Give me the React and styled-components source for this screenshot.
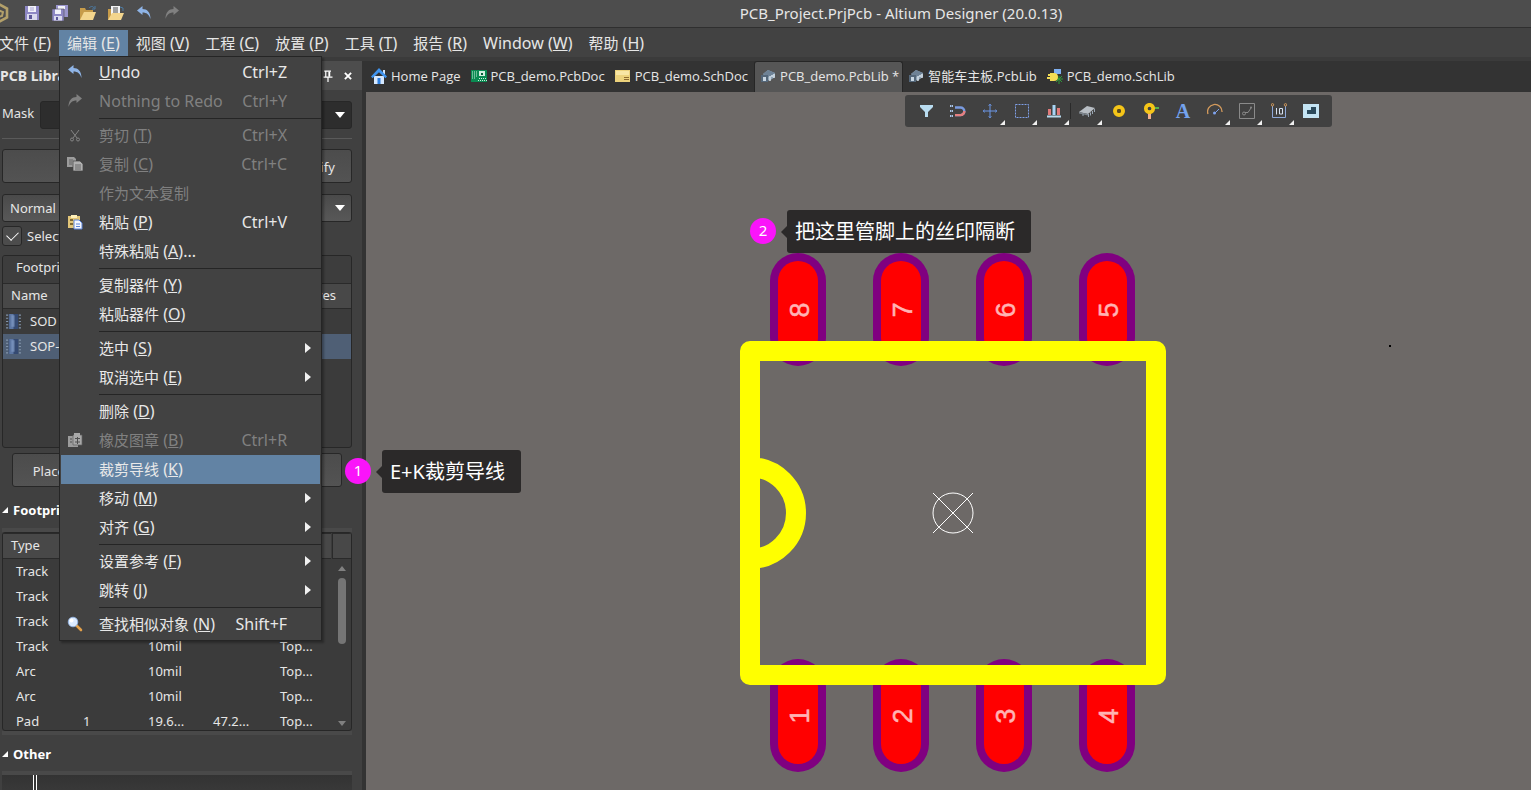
import React from "react";
import styled, { createGlobalStyle, css } from "styled-components";

const GlobalStyle = createGlobalStyle`
  * { box-sizing: border-box; }
  html, body { margin: 0; height: 100%; }
  body {
    background: #404040;
    color: #e6e6e6;
    font-family: "Noto Sans", "Noto Sans CJK SC", sans-serif;
    font-size: 13px;
    overflow: hidden;
  }
  button, input, select, table { font: inherit; color: inherit; }
  #root { height: 100%; }
`;

const Window = styled.div`
  position: relative;
  display: flex;
  flex-direction: column;
  height: 100vh;
  overflow: hidden;
`;

/* ---------- title bar ---------- */

const TitleBar = styled.header`
  display: flex;
  align-items: center;
  height: 28px;
  flex: none;
  padding-bottom: 2px;
  background: #4d4d4d;
  border-bottom: 1px solid #2f2f2f;
`;

const QuickTools = styled.div`
  display: flex;
  align-items: center;
  width: 271px;
  gap: 4px;
  flex: none;
`;

const Logo = styled.svg`
  width: 10px;
  height: 20px;
  margin-right: 6px;
  flex: none;
`;

const QuickButton = styled.button`
  display: grid;
  place-items: center;
  width: 24px;
  height: 24px;
  padding: 0;
  border: 0;
  background: none;
`;

const Title = styled.h1`
  flex: 1;
  margin: 0;
  font-size: 15px;
  font-weight: 400;
  line-height: 20px;
  text-align: center;
`;

/* ---------- menu bar ---------- */

const MenuBar = styled.nav`
  display: flex;
  align-items: flex-start;
  height: 33px;
  flex: none;
  padding-top: 2px;
  margin-left: -9px;
  background: #424242;
  border-bottom: 4px solid #3b3b3b;
  z-index: 5;
`;

const MenuSlot = styled.div`
  position: relative;
`;

const MenuTitle = styled.button`
  display: block;
  height: 27px;
  padding: 0 8px 2px;
  border: 0;
  font-size: 16px;
  line-height: 24px;
  white-space: nowrap;
  background: ${(p) => (p.$open ? "#6283a4" : "transparent")};
`;

const Han = styled.span`
  font-size: 15px;
`;

const Dropdown = styled.div`
  position: absolute;
  left: 0;
  top: 26px;
  width: 263px;
  padding: 1px 0 1px 1px;
  background: #424242;
  border: 1px solid #252525;
  box-shadow: 2px 2px 2px rgba(0, 0, 0, 0.3);
`;

const MenuRow = styled.button`
  display: grid;
  grid-template-columns: 28px 1fr auto 33px;
  align-items: center;
  width: 259px;
  height: 29px;
  padding: 0 0 2px;
  border: 0;
  text-align: left;
  font-size: 16px;
  line-height: 20px;
  white-space: nowrap;
  color: ${(p) => (p.disabled ? "#808080" : "#e8e8e8")};
  background: ${(p) => (p.$active ? "#6283a4" : "transparent")};
`;

const RowIcon = styled.span`
  display: grid;
  place-items: center;
`;

const RowLabel = styled.span`
  padding-left: 10px;
`;

const SubArrow = styled.span`
  justify-self: end;
  margin-right: 9px;
  border-left: 6px solid #f0f0f0;
  border-top: 5px solid transparent;
  border-bottom: 5px solid transparent;
`;

const MenuRule = styled.hr`
  height: 1px;
  margin: 2px 0 2px 38px;
  border: 0;
  background: #252525;
`;

/* ---------- left panel ---------- */

const Workspace = styled.div`
  display: flex;
  flex: 1;
  min-height: 0;
`;

const Panel = styled.aside`
  width: 366px;
  flex: none;
  overflow: hidden;
  background: #404040;
  border-right: 4px solid #333333;
`;

const PanelHeader = styled.div`
  display: flex;
  align-items: center;
  height: 29px;
  padding-right: 4px;
  background: #4d4d4d;
`;

const PanelTitle = styled.h2`
  flex: 1;
  margin: 0;
  font-size: 14px;
  line-height: 20px;
`;

const HeaderButton = styled.button`
  display: grid;
  place-items: center;
  width: 20px;
  height: 20px;
  padding: 0;
  border: 0;
  background: none;
`;

const PanelBody = styled.div`
  width: 352px;
  padding: 10px 0 0 2px;
`;

const MaskRow = styled.div`
  display: flex;
  align-items: center;
  height: 29px;
  gap: 6px;
`;

const MaskLabel = styled.label`
  padding-bottom: 3px;
`;

const frame = css`
  border: 1px solid #272727;
  border-radius: 3px;
`;

const SelectWrap = styled.div`
  display: grid;
  flex: 1;
  align-items: center;
`;

const Select = styled.select`
  ${frame}
  appearance: none;
  padding: 0 7px;
  grid-area: 1 / 1;
  width: 100%;
  height: 28px;
  background: ${(p) => (p.$dark ? "#2d2d2d" : "linear-gradient(#4a4a4a, #585858)")};
`;

const Caret = styled.span`
  grid-area: 1 / 1;
  justify-self: end;
  margin-right: 7px;
  border-top: 6px solid #fff;
  border-left: 5px solid transparent;
  border-right: 5px solid transparent;
  pointer-events: none;
`;

const Rule = styled.hr`
  height: 1px;
  margin: 9px 0 10px;
  border: 0;
  background: #5a5a5a;
`;

const ButtonRow = styled.div`
  display: grid;
  grid-template-columns: ${(p) => p.$columns};
  gap: ${(p) => p.$gap || 8}px;
  margin: ${(p) => p.$margin || 0};
`;

const PanelButton = styled.button`
  ${frame}
  height: 34px;
  padding: 2px 0 0;
  background: linear-gradient(#4c4c4c, #535353);
`;

const CheckLabel = styled.label`
  display: flex;
  align-items: center;
  gap: 5px;
  height: 20px;
  margin: 4px 0 9px;
`;

const CheckBox = styled.input`
  ${frame}
  appearance: none;
  width: 20px;
  height: 20px;
  margin: 0;
  background: #4c4c4c;
  position: relative;
  &:checked::after {
    content: "";
    position: absolute;
    left: 4px;
    top: 4px;
    width: 10px;
    height: 6px;
    border-left: 1px solid #fff;
    border-bottom: 1px solid #fff;
    transform: rotate(-45deg);
  }
`;

const ListFrame = styled.section`
  ${frame}
  height: 193px;
  overflow: hidden;
  background: #3b3b3b;
`;

const ListTitle = styled.h3`
  margin: 0;
  padding-left: 13px;
  height: 27px;
  font-size: 13px;
  font-weight: 400;
  line-height: 22px;
  background: #3d3d3d;
`;

const Grid = styled.table`
  width: 100%;
  table-layout: fixed;
  border-collapse: collapse;
  text-align: left;
  line-height: 18px;
`;

const HeadCell = styled.th`
  height: 25px;
  padding: 0 0 2px 8px;
  font-weight: 400;
  white-space: nowrap;
  background: #484848;
  border-top: 1px solid #2a2a2a;
  border-bottom: 1px solid #2a2a2a;
  text-align: ${(p) => (p.$end ? "right" : "left")};
  padding-right: ${(p) => (p.$end ? "15px" : "0")};
`;

const FootprintRow = styled.tr`
  height: 25px;
  background: ${(p) => (p.$selected ? "#4f5f75" : "transparent")};
`;

const FootprintCell = styled.td`
  padding: 0 0 0 2px;
`;

const PartName = styled.span`
  display: flex;
  align-items: center;
  gap: 8px;
`;

const SectionTitle = styled.h3`
  display: flex;
  align-items: center;
  gap: 5px;
  height: 20px;
  margin: 0;
  font-size: 13px;
  font-weight: 700;
  line-height: 20px;
  color: #fff;
`;

const Fold = styled.span`
  border-bottom: 6px solid #fff;
  border-left: 6px solid transparent;
`;

const PrimitiveBox = styled.div`
  margin: 8px 0 9px;
  border-top: 4px solid #494949;
  border-bottom: 4px solid #494949;
`;

const PrimitiveFrame = styled.div`
  ${frame}
  display: grid;
  grid-template-columns: 1fr 20px;
  height: 199px;
  overflow: hidden;
  background: #3b3b3b;
`;

const PrimitiveRow = styled.tr`
  height: 25px;
`;

const PrimitiveCell = styled.td`
  padding: 0 0 0 13px;
  white-space: nowrap;
`;

const ScrollSide = styled.div`
  display: flex;
  flex-direction: column;
  align-items: center;
  padding: 0 0 8px 2px;
`;

const ScrollCorner = styled.div`
  width: 20px;
  height: 26px;
  flex: none;
  background: #484848;
  border-top: 1px solid #2a2a2a;
  border-left: 1px solid #2a2a2a;
  border-bottom: 1px solid #2a2a2a;
`;

const ScrollArrow = styled.span`
  border-left: 4px solid transparent;
  border-right: 4px solid transparent;
  margin: ${(p) => (p.$down ? "auto 0 0" : "7px 0")};
  ${(p) => (p.$down ? "border-top: 5px solid #808080;" : "border-bottom: 5px solid #808080;")}
`;

const ScrollThumb = styled.span`
  width: 8px;
  height: 66px;
  border-radius: 4px;
  background: #757575;
`;

const Ruler = styled.div`
  height: 40px;
  margin-top: 7px;
  padding-left: 31px;
  border-top: 4px solid #494949;
  background: linear-gradient(#333, #404040);
`;

const RulerMark = styled.div`
  width: 4px;
  height: 36px;
  border-left: 1px solid #fff;
  border-right: 1px solid #fff;
`;

/* ---------- documents ---------- */

const Documents = styled.main`
  display: flex;
  flex-direction: column;
  flex: 1;
  min-width: 0;
`;

const Tabs = styled.div`
  display: flex;
  height: 31px;
  flex: none;
  background: #333333;
`;

const Tab = styled.button`
  display: flex;
  align-items: center;
  gap: 4px;
  height: 31px;
  padding: 0 5px 2px;
  border: 0;
  white-space: nowrap;
  background: none;
  font-family: "Open Sans", "Noto Sans CJK SC", sans-serif;
  ${(p) =>
    p.$active &&
    css`
      margin-left: 1px;
      padding: 0 3px 2px 5px;
      border: 1px solid #262626;
      border-bottom: 0;
      border-radius: 3px 3px 0 0;
      background: #565656;
    `}
`;

const Canvas = styled.div`
  position: relative;
  flex: 1;
  min-height: 0;
  overflow: hidden;
  background: #6d6967;
`;

const Drawing = styled.svg`
  position: absolute;
  left: 0;
  top: 0;
`;

const ToolStrip = styled.div`
  position: absolute;
  top: 3px;
  right: 199px;
  display: flex;
  align-items: center;
  height: 32px;
  padding: 0 5px;
  border-radius: 3px;
  background: #414141;
`;

const ToolButton = styled.button`
  position: relative;
  display: grid;
  place-items: center;
  width: 32px;
  height: 32px;
  padding: 0;
  border: 0;
  background: none;
  ${(p) =>
    p.$more &&
    css`
      &::after {
        content: "";
        position: absolute;
        right: 1px;
        bottom: 2px;
        border-bottom: 5px solid #f0f0f0;
        border-left: 5px solid transparent;
      }
    `}
`;

const StripRule = styled.span`
  width: 1px;
  height: 16px;
  background: #2a2a2a;
`;

/* ---------- callouts over the window ---------- */

const Callout = styled.div`
  position: absolute;
  left: ${(p) => p.$x}px;
  top: ${(p) => p.$y}px;
  display: flex;
  align-items: center;
  z-index: 6;
`;

const Badge = styled.span`
  width: 26px;
  height: 26px;
  margin-bottom: 2px;
  border-radius: 50%;
  background: #fa14fa;
  color: #fff;
  font-size: 15px;
  line-height: 25px;
  text-align: center;
`;

const Pointer = styled.span`
  margin-left: 5px;
  border-right: 6px solid #2b2929;
  border-top: 6px solid transparent;
  border-bottom: 6px solid transparent;
`;

const Bubble = styled.p`
  margin: 0;
  padding: 8px 16px 7px 8px;
  border-radius: 3px;
  background: #2b2929;
  color: #fff;
  font-size: 20px;
  line-height: 28px;
  white-space: nowrap;
`;

/* ---------- icons ---------- */

const Svg = ({ children, size = 16 }) => (
  <svg width={size} height={size} viewBox="0 0 16 16" fill="none" aria-hidden="true">
    {children}
  </svg>
);

const icons = {
  save: (
    <Svg>
      <path d="M1 1h14v14H1z" fill="#8d87c4" />
      <path d="M4 1h8v6H4z" fill="#f2f2fa" />
      <path d="M3 9h10v6H3z" fill="#d9d9ee" />
      <path d="M5 10h3v4H5z" fill="#5c5799" />
      <path d="M6 3h4M6 5h4" stroke="#a8a4d4" />
    </Svg>
  ),
  saveAll: (
    <Svg>
      <path d="M4 0h12v12H4z" fill="#9a95cc" />
      <path d="M6 1h7v3H6z" fill="#f2f2fa" />
      <path d="M0 4h12v12H0z" fill="#8d87c4" stroke="#4d4d4d" strokeWidth=".6" />
      <path d="M3 4.500h6v4.500H3z" fill="#f2f2fa" />
      <path d="M2 11h8v4.500H2z" fill="#d9d9ee" />
      <path d="M4 12h2v3H4z" fill="#5c5799" />
    </Svg>
  ),
  open: (
    <Svg>
      <path d="M0 3h5l1 2h7v10H0z" fill="#c79c4a" />
      <path d="M4 7h12l-3 8H0z" fill="#f3d58d" />
      <path d="M9 3c2-2 4-2 5 0" stroke="#4c7ba3" />
      <path d="M15 1v3h-3" stroke="#4c7ba3" />
    </Svg>
  ),
  openDoc: (
    <Svg>
      <path d="M0 4h4v11H0z" fill="#c79c4a" />
      <path d="M3 1h9v9H3z" fill="#f4f4f4" />
      <path d="M5 3h5M5 5h5M5 7h5" stroke="#4b4b4b" />
      <path d="M4 8h12l-3 7H0z" fill="#f3d58d" />
      <path d="M12 2l3 1v3" stroke="#4c7ba3" />
    </Svg>
  ),
  undo: (
    <Svg>
      <path d="M1 5.500L6.500 1v3C11 4 14.500 7 14.500 14 13 9.500 10.500 7.500 6.500 7.500V10z" fill="#8fb4e6" />
    </Svg>
  ),
  redo: (
    <Svg>
      <path d="M15 5.500L9.500 1v3C5 4 1.500 7 1.500 14 3 9.500 5.500 7.500 9.500 7.500V10z" fill="#808080" />
    </Svg>
  ),
  cut: (
    <Svg>
      <path d="M4 3l6 8M12 3l-6 8" stroke="#858585" />
      <circle cx="5" cy="12.500" r="1.500" stroke="#858585" />
      <circle cx="11" cy="12.500" r="1.500" stroke="#858585" />
    </Svg>
  ),
  copy: (
    <Svg>
      <path d="M0 1h7l2 2v8H0z" fill="#9c9c9c" />
      <path d="M6 5h7l3 3v7H6z" fill="#b0b0b0" stroke="#424242" strokeWidth=".7" />
      <path d="M2 4h4M2 6h3M2 8h3M8 9h6M8 11h6M8 13h6" stroke="#555" strokeWidth=".8" />
    </Svg>
  ),
  paste: (
    <Svg>
      <path d="M1 2h12v12H1z" fill="#e2c578" />
      <path d="M4 1h6v3H4z" fill="#fff0b8" />
      <path d="M3 5h3v2H3zM3 9h3v2H3z" fill="#7d6734" />
      <path d="M7 6h5l3 3v6H7z" fill="#f4f7ff" stroke="#5c83d6" />
      <path d="M9 10h4M9 12.500h4" stroke="#5c83d6" />
    </Svg>
  ),
  stamp: (
    <Svg>
      <path d="M1 4h10v11H1z" fill="#9c9c9c" />
      <path d="M6 3h9v10H6z" fill="#a8a8a8" stroke="#606060" strokeWidth=".7" />
      <path d="M7 1h6v3H7z" fill="#a8a8a8" />
      <path d="M3 7h2M3 10h2M8 6.500h5M8 10h5M10.500 5v7" stroke="#505050" />
    </Svg>
  ),
  find: (
    <Svg>
      <path d="M9 9l5 5" stroke="#e3a04a" strokeWidth="2.600" strokeLinecap="round" />
      <circle cx="6" cy="6" r="4.800" fill="#dcebff" stroke="#8fb4e6" strokeWidth=".8" />
      <circle cx="4.500" cy="4.500" r="2" fill="#fff" />
    </Svg>
  ),
  pin: (
    <Svg size={12}>
      <path d="M3 1.500h9M5 2v7M2 9.500h12M8 10v6" stroke="#fff" strokeWidth="1.600" />
      <path d="M8.500 2H11v7H8.500z" fill="#fff" />
    </Svg>
  ),
  close: (
    <Svg size={10}>
      <path d="M3 3l10 10M13 3L3 13" stroke="#fff" strokeWidth="3" />
    </Svg>
  ),
  chip: (
    <Svg size={17}>
      <path d="M1 2h2M1 5h2M1 8h2M1 11h2M1 14h2M13 2h2M13 5h2M13 8h2M13 11h2M13 14h2" stroke="#8496ad" />
      <path d="M3.500 1h9v14h-9z" fill="#354a72" />
      <path d="M4 1h4v14H4z" fill="#5d77a3" />
      <path d="M6 2h3v11H6z" fill="#7f98c2" opacity=".7" />
    </Svg>
  ),
  home: (
    <Svg>
      <path d="M12 2h2v4h-2z" fill="#d6e6fa" />
      <path d="M3 8h10v8H3z" fill="#d5e8ff" />
      <path d="M8 0L0 8.500l1.500 1.800L8 4.300l6.500 6L16 8.500z" fill="#3f94ef" />
      <path d="M6.500 10h3v6h-3z" fill="#2c7fe0" />
    </Svg>
  ),
  pcb: (
    <Svg>
      <path d="M0 2h16v12H0z" fill="#0a8a52" />
      <path d="M1 4h5M1 6h5M1 8h5M1 10h4" stroke="#c8f0dc" strokeDasharray="1 1" />
      <path d="M8 3h6v5H8z" fill="#d3efe0" />
      <path d="M10 5h2v2h-2z" fill="#06603a" />
      <path d="M7 12.500h9M8 10.500h8" stroke="#c8f0dc" strokeDasharray="1 1" />
    </Svg>
  ),
  sch: (
    <Svg>
      <path d="M0 2h15v12H0z" fill="#ecd27c" />
      <path d="M1 3h13v4H1z" fill="#f8e6a4" />
      <path d="M9 9.500h5M9 11.500h5" stroke="#8f6c2e" />
    </Svg>
  ),
  lib: (
    <Svg>
      <path d="M3 6l5-4 7 3v4l-6 4z" fill="#8ea3b5" />
      <path d="M3 6l5-4 7 3-6 4z" fill="#6e8296" />
      <path d="M1 7h7v7H1z" fill="#54677a" />
      <path d="M3 9h3v4H3z" fill="#c8d6e2" />
      <path d="M10 8v5M12 7v2M14 6v4" stroke="#dfe8f0" strokeWidth="1.300" />
    </Svg>
  ),
  schLib: (
    <Svg>
      <path d="M7 1h7v5H7z" fill="#7fb0f2" />
      <path d="M8 11h8M12 8v8M9 8l6 6M15 8l-6 6" stroke="#2f9a3a" />
      <path d="M3 5h4a4 4 0 010 8H3v-2H0V9h3V8H1V6h2z" fill="#f3dd55" />
    </Svg>
  ),
  filter: (
    <Svg>
      <path d="M2 2h13v2L10 9v5H7V9L2 4z" fill="#b9dcf0" />
    </Svg>
  ),
  magnet: (
    <Svg>
      <path d="M0 3h3M0 8h3M0 13h3" stroke="#a9c4e8" strokeWidth="1.800" strokeDasharray="1.500 .5" />
      <path d="M5 4.500h5.500a3.800 3.800 0 010 7.600H5" stroke="#7a9be0" strokeWidth="2.400" />
      <path d="M5 12.100h5.500A3.800 3.800 0 0014.300 8" stroke="#e58080" strokeWidth="2.400" />
    </Svg>
  ),
  cross: (
    <Svg>
      <path d="M8 1v14M1 8h14" stroke="#6c97e6" />
      <path d="M6.500 3L8 1l1.500 2M6.500 13L8 15l1.500-2M3 6.500L1 8l2 1.500M13 6.500L15 8l-2 1.500" stroke="#6c97e6" strokeWidth=".7" />
    </Svg>
  ),
  marquee: (
    <Svg>
      <path d="M1.500 1.500h13v13h-13z" stroke="#7f9fe6" strokeDasharray="2 1" />
    </Svg>
  ),
  align: (
    <Svg>
      <path d="M2 6h3v6H2zM11 5h3v7h-3z" fill="#e07a7a" />
      <path d="M6.500 2h3v10h-3z" fill="#a9d4f5" />
      <path d="M1 13.500h14" stroke="#b9dcf0" strokeWidth="2" />
    </Svg>
  ),
  part: (
    <Svg>
      <path d="M0 9l8-6 8 2-7 6z" fill="#b8bec4" />
      <path d="M0 9l9 2v1.500L0 10.500z" fill="#7e868e" />
      <path d="M9.500 11v3M11.500 9.500v3M13.500 8v3M15.500 6v3M4 11v2" stroke="#9aa6b2" />
    </Svg>
  ),
  pad: (
    <Svg>
      <circle cx="8" cy="8" r="4" stroke="#f5c518" strokeWidth="4" />
      <circle cx="8" cy="8" r="2" fill="#5a4a1a" />
    </Svg>
  ),
  via: (
    <Svg>
      <path d="M10 5h6" stroke="#57b04a" strokeWidth="2" />
      <path d="M6.500 9v7" stroke="#f5b08a" strokeWidth="3" />
      <circle cx="6.500" cy="5.500" r="3.700" stroke="#f5c518" strokeWidth="3.700" />
    </Svg>
  ),
  arc: (
    <Svg>
      <path d="M1 11A7.200 7.200 0 1115 9" stroke="#d39a5c" strokeWidth="1.300" />
      <path d="M8 10l4-4" stroke="#7fa3ee" />
      <circle cx="7.500" cy="10" r="1.500" fill="#7fa3ee" />
    </Svg>
  ),
  line: (
    <Svg>
      <path d="M.5.5h15v15H.5z" stroke="#8a8a8a" />
      <circle cx="5" cy="10.500" r="1.500" stroke="#8a8a8a" />
      <path d="M6 9.500h3L12 5" stroke="#8a8a8a" />
      <circle cx="12" cy="4.500" r="1" fill="#8a8a8a" />
    </Svg>
  ),
  dimension: (
    <Svg>
      <path d="M1.500 3v11.500h13V3" stroke="#8fa9d8" />
      <circle cx="1.500" cy="1.800" r="1.200" stroke="#d39a5c" />
      <circle cx="14.500" cy="1.800" r="1.200" stroke="#d39a5c" />
      <path d="M5.500 5v6.500" stroke="#d6e0f0" />
      <path d="M8.500 5.500h3v5.500h-3z" stroke="#d6e0f0" />
    </Svg>
  ),
  region: (
    <Svg>
      <path d="M0 1h16v14H0z" fill="#c4e4f4" />
      <path d="M8 4h5v7H4V7h4z" fill="#2b4a5c" />
    </Svg>
  ),
};

const LetterA = styled.span`
  color: #74a3ee;
  font-family: "Liberation Serif", serif;
  font-size: 20px;
  font-weight: 700;
  line-height: 20px;
`;

/* ---------- data ---------- */

const menus = [
  ["文件", "F"],
  ["编辑", "E"],
  ["视图", "V"],
  ["工程", "C"],
  ["放置", "P"],
  ["工具", "T"],
  ["报告", "R"],
  ["Window", "W"],
  ["帮助", "H"],
];

const editMenu = [
  { label: <><u>U</u>ndo</>, keys: "Ctrl+Z", icon: "undo" },
  { label: "Nothing to Redo", keys: "Ctrl+Y", icon: "redo", off: true },
  null,
  { label: "剪切", k: "T", keys: "Ctrl+X", icon: "cut", off: true },
  { label: "复制", k: "C", keys: "Ctrl+C", icon: "copy", off: true },
  { label: "作为文本复制", off: true },
  { label: "粘贴", k: "P", keys: "Ctrl+V", icon: "paste" },
  { label: "特殊粘贴", k: "A", tail: "..." },
  null,
  { label: "复制器件", k: "Y" },
  { label: "粘贴器件", k: "O" },
  null,
  { label: "选中", k: "S", sub: true },
  { label: "取消选中", k: "E", sub: true },
  null,
  { label: "删除", k: "D" },
  { label: "橡皮图章", k: "B", keys: "Ctrl+R", icon: "stamp", off: true },
  { label: "裁剪导线", k: "K", active: true },
  { label: "移动", k: "M", sub: true },
  { label: "对齐", k: "G", sub: true },
  null,
  { label: "设置参考", k: "F", sub: true },
  { label: "跳转", k: "J", sub: true },
  null,
  { label: "查找相似对象", k: "N", keys: "Shift+F", icon: "find" },
];

const primitives = [
  ["Track", "", "", "", ""],
  ["Track", "", "", "", ""],
  ["Track", "", "", "", ""],
  ["Track", "", "10mil", "", "Top..."],
  ["Arc", "", "10mil", "", "Top..."],
  ["Arc", "", "10mil", "", "Top..."],
  ["Pad", "1", "19.6...", "47.2...", "Top..."],
];

const tabs = [
  ["home", "Home Page"],
  ["pcb", "PCB_demo.PcbDoc"],
  ["sch", "PCB_demo.SchDoc"],
  ["lib", "PCB_demo.PcbLib *", true],
  ["lib", "智能车主板.PcbLib"],
  ["schLib", "PCB_demo.SchLib"],
];

const tools = [
  ["filter", "Filter"],
  ["magnet", "Snap"],
  ["cross", "Move", true],
  ["marquee", "Select", true],
  ["align", "Align", true],
  null,
  ["part", "Component", true],
  ["pad", "Pad"],
  ["via", "Via"],
  ["text", "String"],
  ["arc", "Arc", true],
  ["line", "Line", true],
  ["dimension", "Dimension", true],
  ["region", "Region"],
];

const padColumns = [432, 535, 638, 741];

/* ---------- parts ---------- */

const isHan = (label) => typeof label === "string" && label.charCodeAt(0) > 0x2e80;

const Accel = ({ label, k, tail }) => (
  <>
    {isHan(label) ? <Han>{label}</Han> : label}
    {k && (
      <>
        {" ("}
        <u>{k}</u>
        {")"}
      </>
    )}
    {tail}
  </>
);

const EditMenu = () => (
  <Dropdown role="menu">
    {editMenu.map((m, i) =>
      m ? (
        <MenuRow key={i} role="menuitem" disabled={m.off} $active={m.active}>
          <RowIcon>{m.icon && icons[m.icon]}</RowIcon>
          <RowLabel>
            <Accel label={m.label} k={m.k} tail={m.tail} />
          </RowLabel>
          <span>{m.keys}</span>
          {m.sub ? <SubArrow /> : <span />}
        </MenuRow>
      ) : (
        <MenuRule key={i} />
      )
    )}
  </Dropdown>
);

const Pad = ({ x, y }) => (
  <g>
    <rect x={x - 28} y={y} width="56" height="113" rx="28" fill="#800080" />
    <rect x={x - 20} y={y + 8} width="40" height="97" rx="20" fill="#ff0000" />
  </g>
);

const PadName = ({ x, y, name }) => (
  <text
    transform={`translate(${x + 11} ${y}) rotate(-90)`}
    textAnchor="middle"
    fontFamily="Liberation Sans, sans-serif"
    fontSize="27"
    stroke="#ffb3b3"
    strokeWidth="0.5"
    fill="#ffb3b3"
  >
    {name}
  </text>
);

const Footprint = () => (
  <Drawing width="1165" height="698" viewBox="0 0 1165 698">
    {padColumns.map((x, i) => (
      <g key={x}>
        <Pad x={x} y={161} />
        <Pad x={x} y={567} />
        <PadName x={x} y={218} name={8 - i} />
        <PadName x={x} y={624} name={i + 1} />
      </g>
    ))}
    <path
      d="M384 259H790V583H384z M384 375a46 46 0 0 1 0 92"
      fill="none"
      stroke="#ffff00"
      strokeWidth="20"
      strokeLinejoin="round"
    />
    <g stroke="#fff" fill="none">
      <circle cx="587" cy="421" r="20" />
      <path d="M567 401l40 40M607 401l-40 40" />
    </g>
    <rect x="1023" y="253" width="2" height="2" fill="#000" />
  </Drawing>
);

const LibraryPanel = () => (
  <Panel>
    <PanelHeader>
      <PanelTitle>PCB Library</PanelTitle>
      <HeaderButton aria-label="Pin">{icons.pin}</HeaderButton>
      <HeaderButton aria-label="Close">{icons.close}</HeaderButton>
    </PanelHeader>
    <PanelBody>
      <MaskRow>
        <MaskLabel htmlFor="mask">Mask</MaskLabel>
        <SelectWrap>
          <Select id="mask" $dark defaultValue="">
            <option value=""></option>
          </Select>
          <Caret />
        </SelectWrap>
      </MaskRow>
      <Rule />
      <ButtonRow $columns="1fr 84px 84px" $margin="0 0 11px">
        <PanelButton aria-label="Apply" />
        <PanelButton aria-label="Clear" />
        <PanelButton>Magnify</PanelButton>
      </ButtonRow>
      <SelectWrap>
        <Select aria-label="Mode" defaultValue="Normal">
          <option>Normal</option>
        </Select>
        <Caret />
      </SelectWrap>
      <CheckLabel>
        <CheckBox type="checkbox" defaultChecked />
        Select
      </CheckLabel>
      <ListFrame>
        <ListTitle>Footprints</ListTitle>
        <Grid>
          <thead>
            <tr>
              <HeadCell>Name</HeadCell>
              <HeadCell $end>Primitives</HeadCell>
            </tr>
          </thead>
          <tbody>
            {["SOD", "SOP-8"].map((name) => (
              <FootprintRow key={name} $selected={name === "SOP-8"}>
                <FootprintCell colSpan={2}>
                  <PartName>
                    {icons.chip}
                    {name}
                  </PartName>
                </FootprintCell>
              </FootprintRow>
            ))}
          </tbody>
        </Grid>
      </ListFrame>
      <ButtonRow $columns="repeat(4, 1fr)" $gap={12} $margin="5px 10px 13px">
        <PanelButton>Place</PanelButton>
        <PanelButton aria-label="Add" />
        <PanelButton aria-label="Delete" />
        <PanelButton aria-label="Edit" />
      </ButtonRow>
      <SectionTitle>
        <Fold />
        Footprint
      </SectionTitle>
      <PrimitiveBox>
        <PrimitiveFrame>
          <Grid>
            <colgroup>
              <col width="67" />
              <col width="65" />
              <col width="65" />
              <col width="67" />
              <col />
            </colgroup>
            <thead>
              <tr>
                {["Type", "", "", "", ""].map((h, i) => (
                  <HeadCell key={i}>{h}</HeadCell>
                ))}
              </tr>
            </thead>
            <tbody>
              {primitives.map((row, r) => (
                <PrimitiveRow key={r}>
                  {row.map((cell, c) => (
                    <PrimitiveCell key={c}>{cell}</PrimitiveCell>
                  ))}
                </PrimitiveRow>
              ))}
            </tbody>
          </Grid>
          <ScrollSide>
            <ScrollCorner />
            <ScrollArrow />
            <ScrollThumb />
            <ScrollArrow $down />
          </ScrollSide>
        </PrimitiveFrame>
      </PrimitiveBox>
      <SectionTitle>
        <Fold />
        Other
      </SectionTitle>
      <Ruler>
        <RulerMark />
      </Ruler>
    </PanelBody>
  </Panel>
);

export default function App() {
  return (
    <Window>
      <GlobalStyle />
      <TitleBar>
        <QuickTools>
          <Logo viewBox="0 0 10 20" fill="none" aria-hidden="true">
            <path d="M-3 0L7 5.500v9L-3 20" stroke="#b3a06a" strokeWidth="2.600" />
            <path d="M-2 7l5 2-1 4-4 1" stroke="#b3a06a" strokeWidth="2" />
          </Logo>
          {["save", "saveAll", "open", "openDoc", "undo", "redo"].map((name) => (
            <QuickButton key={name} aria-label={name}>
              {icons[name]}
            </QuickButton>
          ))}
        </QuickTools>
        <Title>PCB_Project.PrjPcb - Altium Designer (20.0.13)</Title>
      </TitleBar>
      <MenuBar>
        {menus.map(([label, k]) => (
          <MenuSlot key={k}>
            <MenuTitle $open={k === "E"}>
              <Accel label={label} k={k} />
            </MenuTitle>
            {k === "E" && <EditMenu />}
          </MenuSlot>
        ))}
      </MenuBar>
      <Workspace>
        <LibraryPanel />
        <Documents>
          <Tabs role="tablist">
            {tabs.map(([icon, label, active]) => (
              <Tab key={label} role="tab" aria-selected={!!active} $active={active}>
                {icons[icon]}
                {label}
              </Tab>
            ))}
          </Tabs>
          <Canvas>
            <Footprint />
            <ToolStrip role="toolbar">
              {tools.map((t, i) =>
                t ? (
                  <ToolButton key={i} aria-label={t[1]} $more={t[2]}>
                    {t[0] === "text" ? <LetterA>A</LetterA> : icons[t[0]]}
                  </ToolButton>
                ) : (
                  <StripRule key={i} />
                )
              )}
            </ToolStrip>
          </Canvas>
        </Documents>
      </Workspace>
      <Callout $x={345} $y={450}>
        <Badge>1</Badge>
        <Pointer />
        <Bubble>E+K裁剪导线</Bubble>
      </Callout>
      <Callout $x={750} $y={210}>
        <Badge>2</Badge>
        <Pointer />
        <Bubble>把这里管脚上的丝印隔断</Bubble>
      </Callout>
    </Window>
  );
}
